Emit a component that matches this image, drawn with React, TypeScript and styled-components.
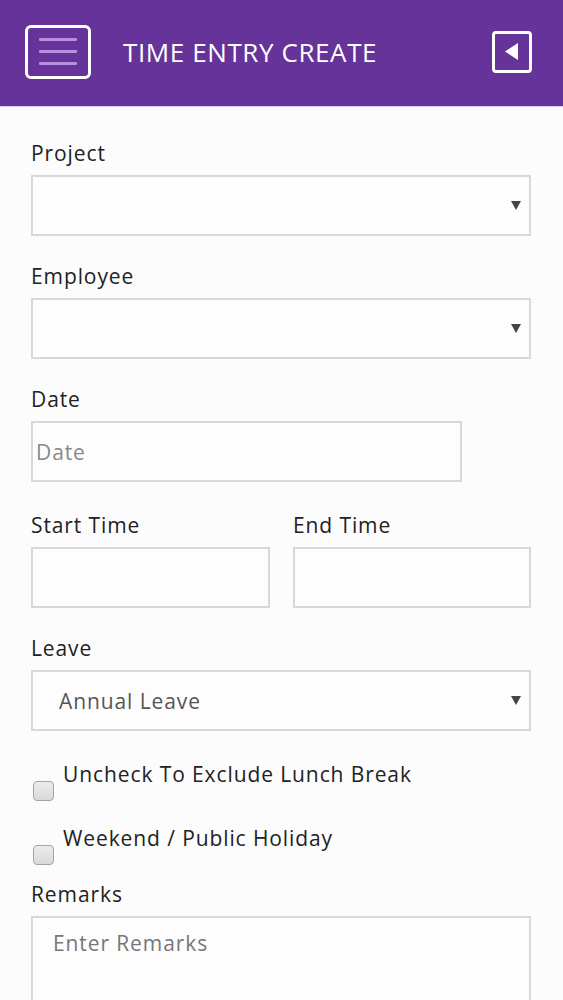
import React from 'react';
import styled, { createGlobalStyle } from 'styled-components';

const GlobalStyle = createGlobalStyle`
  html, body {
    margin: 0;
    padding: 0;
    background: #fcfcfd;
  }
  body {
    font-family: 'Open Sans', 'Noto Sans', sans-serif;
    color: #222;
  }
  * {
    box-sizing: border-box;
  }
`;

const Page = styled.div`
  width: 563px;
  height: 1000px;
  overflow: hidden;
  background: #fcfcfd;
`;

const Header = styled.header`
  display: flex;
  align-items: center;
  height: 107px;
  padding: 0 31px 3px 25px;
  background: #653399;
  border-bottom: 1px solid #dfc8f4;
`;

const MenuButton = styled.button`
  display: flex;
  flex-direction: column;
  justify-content: center;
  align-items: center;
  gap: 9px;
  width: 66px;
  height: 54px;
  padding: 0;
  border: 3px solid #fff;
  border-radius: 6px;
  background: transparent;
  cursor: pointer;
`;

const MenuLine = styled.span`
  display: block;
  width: 38px;
  height: 3px;
  border-radius: 1px;
  background: #b68fe0;
`;

const Title = styled.h1`
  flex: 1;
  margin: 0 0 0 32px;
  font-family: 'Open Sans', sans-serif;
  font-size: 26px;
  font-weight: 400;
  color: #fff;
  letter-spacing: 0.6px;
`;

const BackButton = styled.button`
  display: flex;
  align-items: center;
  justify-content: center;
  width: 40px;
  height: 42px;
  padding: 0 2px 0 0;
  border: 3px solid #fff;
  border-radius: 4px;
  background: transparent;
  cursor: pointer;
`;

const Form = styled.form`
  display: flex;
  flex-direction: column;
  padding: 32px 32px 0 31px;
  letter-spacing: 0.9px;
`;

const Field = styled.div<{ $top?: number }>`
  display: flex;
  flex-direction: column;
  margin-top: ${(p) => p.$top ?? 26}px;
  min-width: 0;
`;

const Label = styled.label`
  display: block;
  margin-bottom: 8px;
  font-size: 21px;
  line-height: 28px;
  color: #222;
`;

const SelectBox = styled.div`
  display: flex;
  align-items: center;
  justify-content: space-between;
  height: 61px;
  padding: 0 8px 0 26px;
  border: 2px solid #d8d8d8;
  background: #fdfdfe;
  font-size: 21px;
  color: #555;
`;

const TextInput = styled.input<{ $width?: string; $padLeft?: number }>`
  width: ${(p) => p.$width ?? '100%'};
  height: 61px;
  padding: 0 0 0 ${(p) => p.$padLeft ?? 3}px;
  border: 2px solid #d8d8d8;
  background: #fdfdfe;
  font-family: 'Open Sans', sans-serif;
  font-size: 21px;
  letter-spacing: 0.9px;
  color: #222;
  outline: none;
  &::placeholder {
    color: #888;
  }
`;

const TimeRow = styled.div`
  display: grid;
  grid-template-columns: 239px 238px;
  justify-content: space-between;
  margin-top: 3px;
`;

const CheckRow = styled.div<{ $top: number }>`
  display: flex;
  align-items: flex-start;
  gap: 9px;
  margin-top: ${(p) => p.$top}px;
  padding-left: 2px;
`;

const CheckBox = styled.input`
  appearance: none;
  flex: none;
  width: 21px;
  height: 20px;
  margin: 21px 0 0 0;
  border: 1px solid #a4a4a4;
  border-radius: 4px;
  background: linear-gradient(#ececec, #d9d9d9);
`;

const CheckLabel = styled.label`
  font-size: 21px;
  line-height: 28px;
  color: #222;
`;

const Remarks = styled.textarea`
  width: 100%;
  height: 140px;
  padding: 11px 20px;
  border: 2px solid #d8d8d8;
  background: #fdfdfe;
  font-family: 'Open Sans', sans-serif;
  font-size: 21px;
  line-height: 28px;
  letter-spacing: 0.9px;
  resize: none;
  outline: none;
  &::placeholder {
    color: #777;
  }
`;

const Caret = () => (
  <svg width="10" height="9" viewBox="0 0 10 9">
    <path d="M0 0h10L5 9z" fill="#444" />
  </svg>
);

const Select = ({ value }: { value?: string }) => (
  <SelectBox>
    <span>{value}</span>
    <Caret />
  </SelectBox>
);

export default function App() {
  return (
    <Page>
      <GlobalStyle />
      <Header>
        <MenuButton type="button" aria-label="Menu">
          <MenuLine />
          <MenuLine />
          <MenuLine />
        </MenuButton>
        <Title>TIME ENTRY CREATE</Title>
        <BackButton type="button" aria-label="Back">
          <svg width="13" height="17" viewBox="0 0 13 17">
            <path d="M13 0v17L0 8.5z" fill="#fff" />
          </svg>
        </BackButton>
      </Header>
      <Form>
        <Field $top={0}>
          <Label>Project</Label>
          <Select />
        </Field>
        <Field>
          <Label>Employee</Label>
          <Select />
        </Field>
        <Field>
          <Label>Date</Label>
          <TextInput $width="431px" placeholder="Date" />
        </Field>
        <TimeRow>
          <Field>
            <Label>Start Time</Label>
            <TextInput />
          </Field>
          <Field>
            <Label>End Time</Label>
            <TextInput />
          </Field>
        </TimeRow>
        <Field>
          <Label>Leave</Label>
          <Select value="Annual Leave" />
        </Field>
        <CheckRow $top={29}>
          <CheckBox type="checkbox" id="lunch" />
          <CheckLabel htmlFor="lunch">Uncheck To Exclude Lunch Break</CheckLabel>
        </CheckRow>
        <CheckRow $top={23}>
          <CheckBox type="checkbox" id="holiday" />
          <CheckLabel htmlFor="holiday">Weekend / Public Holiday</CheckLabel>
        </CheckRow>
        <Field $top={15}>
          <Label>Remarks</Label>
          <Remarks placeholder="Enter Remarks" />
        </Field>
      </Form>
    </Page>
  );
}
